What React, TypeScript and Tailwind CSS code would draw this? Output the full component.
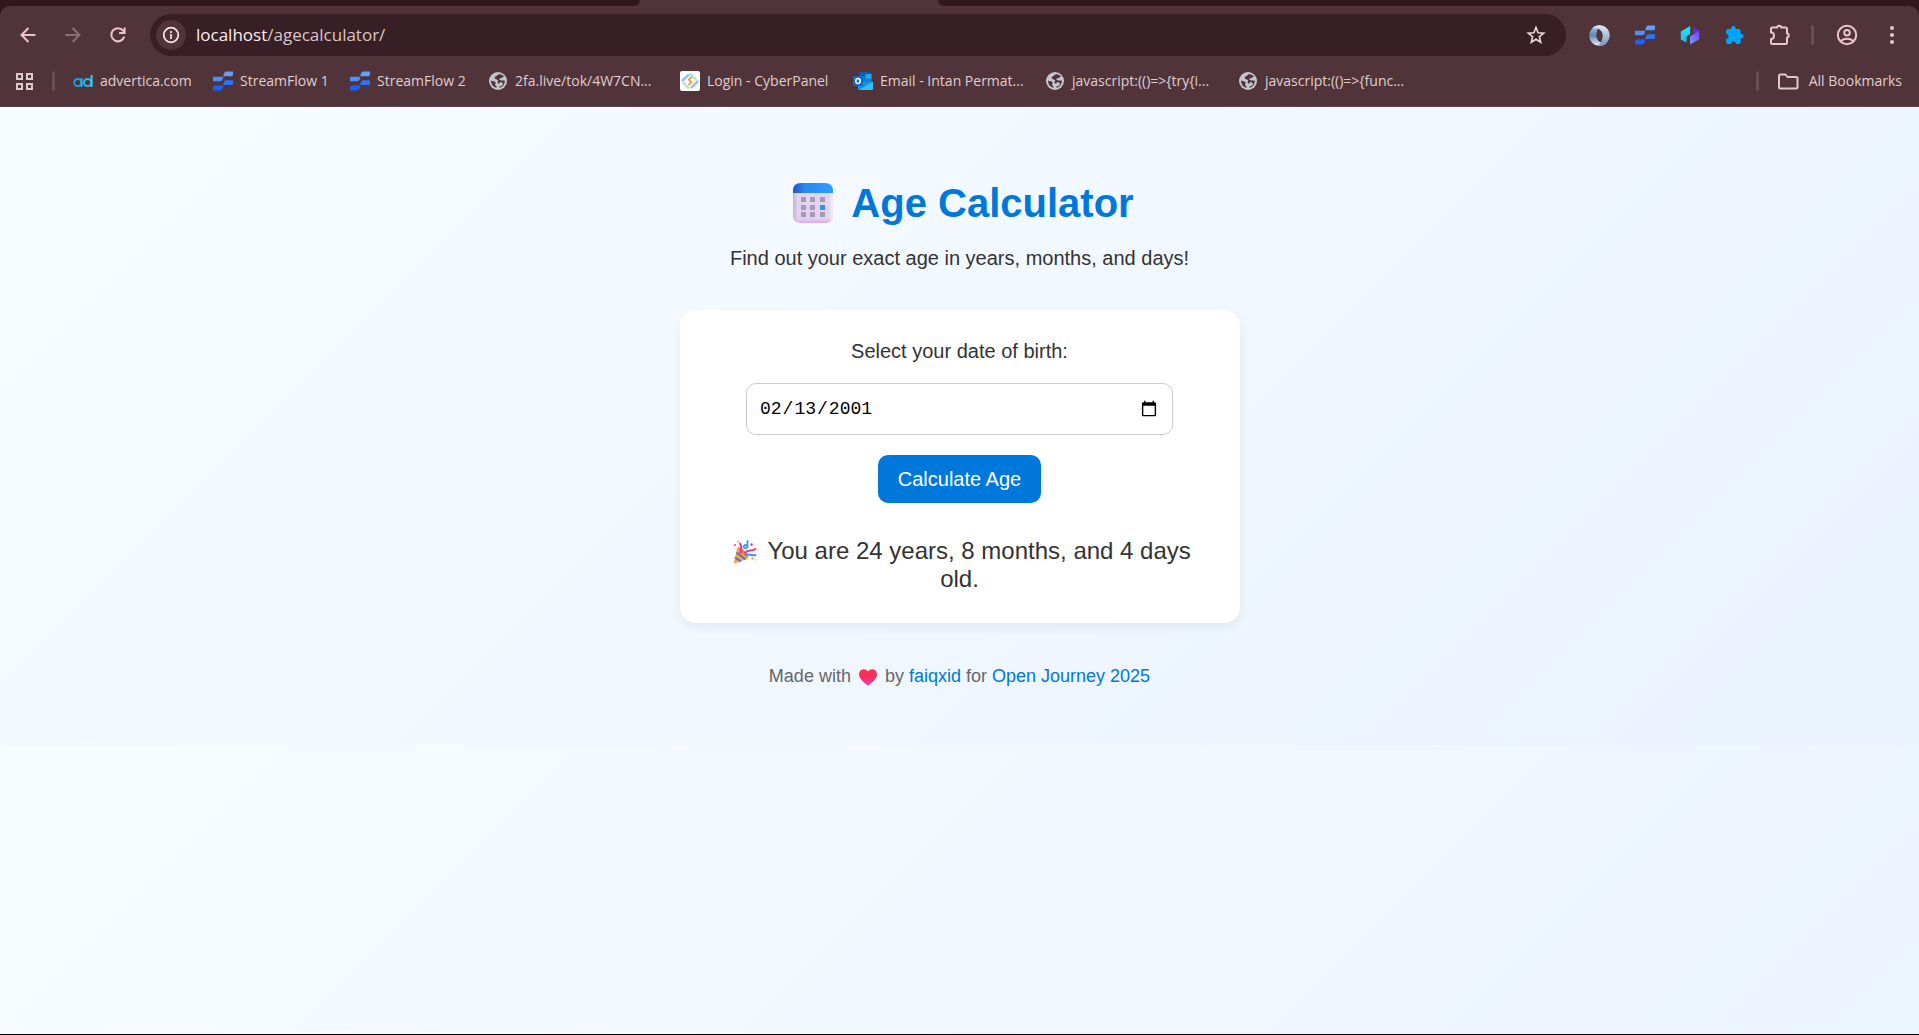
import { useId, useState } from "react";
import type { ReactNode } from "react";

const StreamFlowIcon = () => (
  <svg width="20" height="20" viewBox="0 0 20 20" aria-hidden="true">
    <path d="M13.500.500H20V3.500q0 1.800-1.800 1.800H10.300Q10.800.500 13.500.500Z" fill="#5fa0ff" />
    <path d="M0 5.800H10.300Q9.800 10.300 7 10.300H0Z" fill="#4a90fd" />
    <path d="M13.500 9.200H20V12.500q0 1.500-1.800 1.500H10.300q.500-4.800 3.200-4.800Z" fill="#2a74fc" />
    <path d="M1.800 14.600H10.300Q9.800 19.400 7 19.400H0V16.300q0-1.700 1.800-1.700Z" fill="#1b60fa" />
  </svg>
);

const GlobeIcon = () => (
  <svg width="20" height="20" viewBox="0 0 20 20" aria-hidden="true">
    <circle cx="10" cy="10" r="9" fill="#c3c6cb" />
    <path d="M10.500 3.300c2.500-.4 4.500.6 5.500 2.400-1.600.2-2 1.600-3.500 1.600s-1.500 1-.5 1.700c1.500.9 3 .2 4.900.7 0 3.600-2.600 6.500-5.400 7.100-.7-1.300 1.300-1.700 1-3-.4-1.300-2.500-.8-2.900-2-.3-1.100.9-1.600.4-2.600-.7-1.200-2.900-.6-3.200-2C6.400 5.200 8.500 5.600 10.500 3.300Z" fill="#50343a" />
    <path d="M3 9.600c1.500.7 3.700.4 4.500 1.700.6 1.200-.8 1.800-.2 2.900.5.900 1.500.9 1.400 2.600C5.500 16.300 3 13.500 3 9.600Z" fill="#50343a" />
    <path d="M11.500 11.500c1.500-.6 3.300.2 3.500 1.300-.3 1.300-1.700 2.200-2.500 2.500-1-1-1.600-2.500-1-3.800Z" fill="#c3c6cb" />
  </svg>
);

const CyberPanelIcon = () => (
  <svg width="20" height="20" viewBox="0 0 20 20" aria-hidden="true">
    <rect width="20" height="20" rx="2" fill="#fff" />
    <path d="M2 10 9 3.500" stroke="#8ec3f5" strokeWidth="2.500" />
    <path d="m9.500 2.500 7 6.500" stroke="#bfe3cb" strokeWidth="2.500" />
    <path d="m18 10-7 7" stroke="#8ec3f5" strokeWidth="2.500" />
    <path d="m2.500 11 6.500 6.500" stroke="#bfe3cb" strokeWidth="2.500" />
    <path d="m11.800 6-3 2.500 2.600 2.800-3 2.700" fill="none" stroke="#f59b1c" strokeWidth="1.700" />
  </svg>
);

const OutlookIcon = () => (
  <svg width="20" height="20" viewBox="0 0 20 20" aria-hidden="true">
    <path d="M6 2q0-1 1-1h10q1.500 0 1.500 1.500V11H6Z" fill="#0f5bb0" />
    <path d="M6 5h6.500v6H6Z" fill="#0a7bd6" />
    <path d="M12.500 3h6v5h-6Z" fill="#28a8ea" />
    <path d="M12.500 7.500h6V12h-6Z" fill="#1482d8" />
    <path d="M5 10.500 20 11v6.500q0 1.500-1.500 1.500h-12Q5 19 5 17.500Z" fill="#1a8fe0" />
    <path d="M6 19 20 10.500v7q0 1.500-1.500 1.500Z" fill="#38bdf2" />
    <rect y="5" width="10" height="10" rx="1" fill="#0a6ccb" />
    <ellipse cx="5" cy="10" rx="2.200" ry="2.400" fill="none" stroke="#fff" strokeWidth="1.500" />
  </svg>
);

const AdverticaIcon = () => (
  <svg width="20" height="20" viewBox="0 0 20 20" fill="none" strokeWidth="2" aria-hidden="true">
    <circle cx="4.800" cy="11.500" r="3.600" stroke="#1d9fe6" />
    <path d="M8.600 7v9" stroke="#22b0ea" />
    <circle cx="14.600" cy="11.500" r="3.600" stroke="#2ab8ee" />
    <path d="M18.600 4v12" stroke="#35cdf5" />
  </svg>
);

const JsonIcon = () => {
  const id = useId();
  return (
    <svg width="21" height="21" viewBox="0 0 21 21" fill="none" aria-hidden="true">
      <defs>
        <linearGradient id={`${id}a`} x1="0" y1="0" x2="0" y2="1">
          <stop offset="0" stopColor="#a9c3db" />
          <stop offset=".5" stopColor="#6288ad" />
          <stop offset="1" stopColor="#e3eef8" />
        </linearGradient>
        <linearGradient id={`${id}b`} x1="0" y1="0" x2="0" y2="1">
          <stop offset="0" stopColor="#dce8f3" />
          <stop offset=".5" stopColor="#a9c2da" />
          <stop offset="1" stopColor="#6d93b8" />
        </linearGradient>
      </defs>
      <path d="M12 .3C5 .3.300 5 .300 10.500S4.500 20.700 10.500 20.700c4 0 6-1.500 7.500-3.500-5 2-10.500-.7-10.500-6.700C7.500 6 9 2.500 12 .3Z" fill={`url(#${id}a)`} />
      <path d="M9 20.700c7 0 11.700-4.700 11.700-10.200S16.500.3 10.500.3C6.500.3 4.500 1.800 3 3.800c5-2 10.500.7 10.500 6.700 0 4.500-1.500 8-4.500 10.200Z" fill={`url(#${id}b)`} />
      <ellipse cx="10.500" cy="10.500" rx="2.900" ry="4.400" fill="#50343a" />
    </svg>
  );
};

const HexIcon = () => {
  const id = useId();
  return (
    <svg width="20" height="20" viewBox="0 0 20 20" aria-hidden="true">
      <defs>
        <linearGradient id={`${id}a`} x1="0" y1="0" x2="0" y2="1">
          <stop offset="0" stopColor="#22e6f5" />
          <stop offset="1" stopColor="#22b9ee" />
        </linearGradient>
        <linearGradient id={`${id}b`} x1="1" y1="0" x2="0" y2="1">
          <stop offset="0" stopColor="#7a3df0" />
          <stop offset="1" stopColor="#6fa0fb" />
        </linearGradient>
      </defs>
      <path d="M10.200 1V9L6.500 11.500V17.500L.8 14.500V6.500Z" fill={`url(#${id}a)`} />
      <path d="M13 1.500 19.200 5.500 13 9Z" fill="#6a26e0" />
      <path d="M19.200 5.700V14.500L10 19.500V11.500Z" fill={`url(#${id}b)`} />
    </svg>
  );
};

const SolidPuzzleIcon = () => (
  <svg width="20" height="20" viewBox="0 0 20 20" fill="#00a6fb" aria-hidden="true">
    <path d="M6.300 4a2.300 2.300 0 1 1 4.400 0H13.800q1.800 0 1.800 1.800V8.900a2.300 2.300 0 1 1 0 4.400v3.900q0 1.700-1.800 1.700H11a2.400 2.400 0 0 0-4.800 0H3q-1.800 0-1.800-1.700V13.800a2.400 2.400 0 0 0 0-4.800V5.800Q1.200 4 3 4Z" />
  </svg>
);

const OutlinePuzzleIcon = () => (
  <svg width="24" height="24" viewBox="0 0 24 24" fill="none" stroke="#eec3cd" strokeWidth="2" strokeLinejoin="round" aria-hidden="true">
    <path d="M4 4.500H9.200a2 1.700 0 0 1 4 0H17.500q1.500 0 1.500 1.500v4.500a1.700 2 0 0 1 0 4V19.500q0 1.500-1.500 1.500H4.500Q3 21 3 19.500V16c4 0 4-6.500 0-6.500V5.500q0-1 1-1Z" />
  </svg>
);

const Calendar = () => {
  const id = useId();
  return (
    <svg width="40" height="40" viewBox="0 0 40 40" role="img" aria-label="Calendar">
      <defs>
        <linearGradient id={`${id}a`} x1="0" y1="0" x2="1" y2="0">
          <stop offset="0" stopColor="#2b50cc" />
          <stop offset=".3" stopColor="#2789f0" />
          <stop offset="1" stopColor="#2ba0ff" />
        </linearGradient>
        <linearGradient id={`${id}b`} x1="0" y1="0" x2="0" y2="1">
          <stop offset="0" stopColor="#e2d5ee" />
          <stop offset=".85" stopColor="#e2d0ef" />
          <stop offset="1" stopColor="#d6aaf0" />
        </linearGradient>
        <linearGradient id={`${id}c`} x1="0" y1="0" x2="1" y2="0">
          <stop offset="0" stopColor="#c3b4cc" />
          <stop offset=".12" stopColor="#c3b4cc" stopOpacity="0" />
          <stop offset=".9" stopColor="#fff" stopOpacity="0" />
          <stop offset="1" stopColor="#f2e8f8" />
        </linearGradient>
      </defs>
      <path d="M0 10h40v22q0 8-8 8H8q-8 0-8-8Z" fill={`url(#${id}b)`} />
      <path d="M0 10h40v22q0 8-8 8H8q-8 0-8-8Z" fill={`url(#${id}c)`} />
      <path d="M0 10V8q0-8 8-8h24q8 0 8 8v2Z" fill={`url(#${id}a)`} />
      {[14, 22, 29].map((y, r) =>
        [8, 17, 27].map((x, c) => (
          <rect key={`${x}-${y}`} x={x} y={y} width="5" height="5" fill={r === 1 && c === 2 ? "#2b96f8" : "#a79bb3"} />
        )),
      )}
    </svg>
  );
};

const PartyPopper = () => (
  <svg width="24" height="24" viewBox="0 0 24 24" fill="none" role="img" aria-label="Party popper">
    <path d="M1 22.500 4 8.500q.5-1.500 2-1.500C10 8 15 13.500 15.500 17q0 1.500-1.500 2L2 23.500q-1.200 0-1-1Z" fill="#f6a63a" />
    <path d="m2 17.500 6 4M3.500 12.500l9 7" stroke="#5a6fd8" strokeWidth="2" />
    <path d="M5.500 7.500C9 8 14.500 13 15 17c-4-1-8.500-5-9.500-9.500Z" fill="#d98a3c" />
    <path d="M7.500 12.500c1.500-3 1-6-.5-9" stroke="#f2319f" strokeWidth="2" strokeLinecap="round" />
    <path d="M14.500 1v5.500c-1 3-4.500 2-3.500-.5 1-1.800 3-1 3 1" stroke="#2e9fe6" strokeWidth="1.800" strokeLinecap="round" />
    <path d="M12 13c3-4 6-1 10.500-4" stroke="#f2319f" strokeWidth="2" strokeLinecap="round" />
    <path d="M12.500 15.500c3-3 5 1 10-.5" stroke="#3a9bea" strokeWidth="2" strokeLinecap="round" />
    <circle cx="2" cy="5" r="1" fill="#f2319f" />
    <circle cx="5" cy="1.500" r="1" fill="#f7a928" />
    <circle cx="18.500" cy="4.500" r="1.200" fill="#f2319f" />
    <path d="m19.500 17 1.500 1.500-1.500 1.500-1.500-1.500Z" fill="#f7a15a" />
    <circle cx="22" cy="20" r=".8" fill="#f6c978" />
  </svg>
);

const Heart = () => {
  const id = useId();
  return (
    <svg width="18" height="18" viewBox="0 0 18 18" role="img" aria-label="love">
      <defs>
        <linearGradient id={id} x1="0" y1="0" x2="0" y2="1">
          <stop offset="0" stopColor="#f5384c" />
          <stop offset=".5" stopColor="#fa2c60" />
          <stop offset="1" stopColor="#f53fb4" />
        </linearGradient>
      </defs>
      <path d="M9 17.500C4 14 0 10 0 6.200 0 1 6.500-.7 9 3.500 11.500-.7 18 1 18 6.200c0 3.800-4 7.800-9 11.300Z" fill={`url(#${id})`} />
    </svg>
  );
};

const bookmarks: { label: string; icon: ReactNode; width: string }[] = [
  { label: "advertica.com", icon: <AdverticaIcon />, width: "w-[140px]" },
  { label: "StreamFlow 1", icon: <StreamFlowIcon />, width: "w-[137px]" },
  { label: "StreamFlow 2", icon: <StreamFlowIcon />, width: "w-[138px]" },
  { label: "2fa.live/tok/4W7CN...", icon: <GlobeIcon />, width: "w-[192px]" },
  { label: "Login - CyberPanel", icon: <CyberPanelIcon />, width: "w-[173px]" },
  { label: "Email - Intan Permat...", icon: <OutlookIcon />, width: "w-[192px]" },
  { label: "javascript:(()=>{try{i...", icon: <GlobeIcon />, width: "w-[193px]" },
  { label: "javascript:(()=>{func...", icon: <GlobeIcon />, width: "w-[193px]" },
];

function ToolButton({ label, children }: { label: string; children: ReactNode }) {
  return (
    <button type="button" aria-label={label} className="flex h-9 w-[45px] shrink-0 items-center justify-center">
      {children}
    </button>
  );
}

function BrowserChrome() {
  const [url, setUrl] = useState("/agecalculator/");
  return (
    <header className="bg-[#31181d] font-['Open_Sans',sans-serif] text-[#e0cdd0]">
      <div className="flex h-1.5">
        <div className="w-1/3 bg-[#50343a]">
          <div className="h-full rounded-br-xl bg-[#31181d]" />
        </div>
        <div className="w-[298px] bg-[#50343a]" />
        <div className="flex-1 bg-[#50343a]">
          <div className="h-full rounded-bl-xl bg-[#31181d]" />
        </div>
      </div>
      <div className="rounded-t-[10px] border-b border-[#5c4349] bg-[#50343a]">
        <div className="flex h-[58px] items-center pr-[5px] pl-[5px]">
          <ToolButton label="Back">
            <svg width="20" height="20" viewBox="0 0 20 20" fill="none" stroke="#eec3cd" strokeWidth="2" aria-hidden="true">
              <path d="M17.500 10H3.500M10.500 3 3.500 10l7 7" />
            </svg>
          </ToolButton>
          <ToolButton label="Forward">
            <svg width="20" height="20" viewBox="0 0 20 20" fill="none" stroke="#8f6f76" strokeWidth="2" aria-hidden="true">
              <path d="M2.500 10h14M9.500 3l7 7-7 7" />
            </svg>
          </ToolButton>
          <ToolButton label="Reload">
            <svg width="20" height="20" viewBox="0 0 20 20" fill="none" stroke="#eec3cd" strokeWidth="2" aria-hidden="true">
              <path d="M16.300 11.500A6.600 6.600 0 1 1 15 5.500l1.500 2" />
              <path d="M16.600 2.500v5.500h-5.500" />
            </svg>
          </ToolButton>
          <div className="ml-2.5 flex h-[42px] min-w-0 flex-1 items-center rounded-full bg-[#381f25] pr-5 pl-1.5">
            <button type="button" aria-label="View site information" className="flex size-[30px] shrink-0 items-center justify-center rounded-full bg-[#50343a]">
              <svg width="18" height="18" viewBox="0 0 18 18" fill="none" stroke="#f6e8ea" strokeWidth="1.700" aria-hidden="true">
                <circle cx="9" cy="9" r="7.300" />
                <path d="M9 8v5M9 5v2" />
              </svg>
            </button>
            <label htmlFor="address" className="ml-2.5 text-[17px] leading-6 text-[#fbeef0]">localhost</label>
            <input
              id="address"
              value={url}
              onChange={(e) => setUrl(e.target.value)}
              className="min-w-0 flex-1 text-[17px] leading-6 text-[#d8c5c8] outline-none"
            />
            <button type="button" aria-label="Bookmark this tab">
              <svg width="20" height="20" viewBox="0 0 20 20" fill="none" stroke="#eadadd" strokeWidth="1.600" aria-hidden="true">
                <path d="m10 2.500 2.100 5.200 5.600.4-4.300 3.600 1.300 5.500L10 14.300l-4.700 2.900 1.300-5.500L2.300 8.100l5.600-.4Z" />
              </svg>
            </button>
          </div>
          <div className="ml-[11px] flex items-center">
            <ToolButton label="JSON viewer"><JsonIcon /></ToolButton>
            <ToolButton label="StreamFlow"><StreamFlowIcon /></ToolButton>
            <ToolButton label="Hex extension"><HexIcon /></ToolButton>
            <ToolButton label="Puzzle extension"><SolidPuzzleIcon /></ToolButton>
            <ToolButton label="Extensions"><OutlinePuzzleIcon /></ToolButton>
          </div>
          <div className="mr-2.5 ml-[9px] h-5 w-[3px] rounded bg-[#6b4d54]" />
          <ToolButton label="Profile">
            <svg width="22" height="22" viewBox="0 0 22 22" fill="none" stroke="#eec3cd" strokeWidth="2" aria-hidden="true">
              <circle cx="11" cy="11" r="9.200" />
              <circle cx="11" cy="8.800" r="2.800" />
              <path d="M4.500 17q6.500-4.500 13 0" />
            </svg>
          </ToolButton>
          <ToolButton label="Menu">
            <svg width="20" height="20" viewBox="0 0 20 20" fill="#eec3cd" aria-hidden="true">
              <circle cx="10" cy="3" r="2" />
              <circle cx="10" cy="10" r="2" />
              <circle cx="10" cy="17" r="2" />
            </svg>
          </ToolButton>
        </div>
        <nav aria-label="Bookmarks" className="flex h-[42px] items-start pr-[17px] pl-3.5 text-sm">
          <div className="flex h-[34px] w-full items-center">
            <button type="button" aria-label="Apps">
              <svg width="20" height="20" viewBox="0 0 20 20" fill="none" stroke="#dccbce" strokeWidth="2" aria-hidden="true">
                <path d="M3 3h5v5H3ZM13 3h5v5h-5ZM3 13h5v5H3ZM13 13h5v5h-5Z" />
              </svg>
            </button>
            <div className="mr-[18px] ml-[18px] h-5 w-[3px] rounded bg-[#6b4d54]" />
            {bookmarks.map((b) => (
              <a key={b.label} href="#" className={`flex shrink-0 items-center gap-[7px] whitespace-nowrap ${b.width}`}>
                {b.icon}
                {b.label}
              </a>
            ))}
            <div className="mr-[18px] ml-auto h-5 w-[3px] rounded bg-[#6b4d54]" />
            <a href="#" className="flex items-center gap-2.5 whitespace-nowrap">
              <svg width="22" height="20" viewBox="0 0 22 20" fill="none" stroke="#dccbce" strokeWidth="2" strokeLinejoin="round" aria-hidden="true">
                <path d="M2 16.500V5q0-1.500 1.500-1.500h5L10.500 6H19q1.500 0 1.500 1.500v9q0 1-1.500 1H3.500q-1.500 0-1.500-1Z" />
              </svg>
              All Bookmarks
            </a>
          </div>
        </nav>
      </div>
    </header>
  );
}

export default function App() {
  const [dob, setDob] = useState("2001-02-13");
  return (
    <div className="flex min-h-screen flex-col border-b border-black">
      <BrowserChrome />
      <main className="flex flex-1 flex-col items-center bg-[linear-gradient(135deg,#f7fdff,#eaf2ff)] bg-[length:100%_638px] px-4 pt-[73px] text-center font-['Liberation_Sans',Arial,sans-serif] text-[#333]">
        <h1 className="flex items-center gap-2.5 text-[40px] leading-[46px] font-bold text-[#0078db]">
          <span className="flex w-14 justify-center"><Calendar /></span>
          Age Calculator
        </h1>
        <p className="mt-5 text-xl leading-6">Find out your exact age in years, months, and days!</p>
        <section className="mt-10 flex w-full max-w-[560px] flex-col items-center rounded-2xl bg-white px-9 pt-[29px] pb-[30px] shadow-[0_5px_12px_rgba(0,0,0,0.06)]">
          <label htmlFor="dob" className="text-xl leading-6">Select your date of birth:</label>
          <input
            id="dob"
            type="date"
            value={dob}
            onChange={(e) => setDob(e.target.value)}
            className="mt-5 h-[52px] w-[427px] max-w-full rounded-[10px] border border-[#ccc] px-3 font-['Liberation_Mono',monospace] text-[18px] text-black"
          />
          <button type="button" className="mt-5 h-12 rounded-[10px] bg-[#0078db] px-5 text-xl text-white">Calculate Age</button>
          <p className="mt-[34px] text-2xl leading-7">
            <span className="inline-flex w-[33px] justify-center align-text-bottom"><PartyPopper /></span>{" "}
            You are 24 years, 8 months, and 4 days old.
          </p>
        </section>
        <footer className="mt-[41px] text-lg leading-6 text-[#666]">
          Made with <span className="inline-flex w-6 justify-center align-text-bottom"><Heart /></span> by{" "}
          <a href="#" className="text-[#0078db]">faiqxid</a> for{" "}
          <a href="#" className="text-[#0078db]">Open Journey 2025</a>
        </footer>
      </main>
    </div>
  );
}
